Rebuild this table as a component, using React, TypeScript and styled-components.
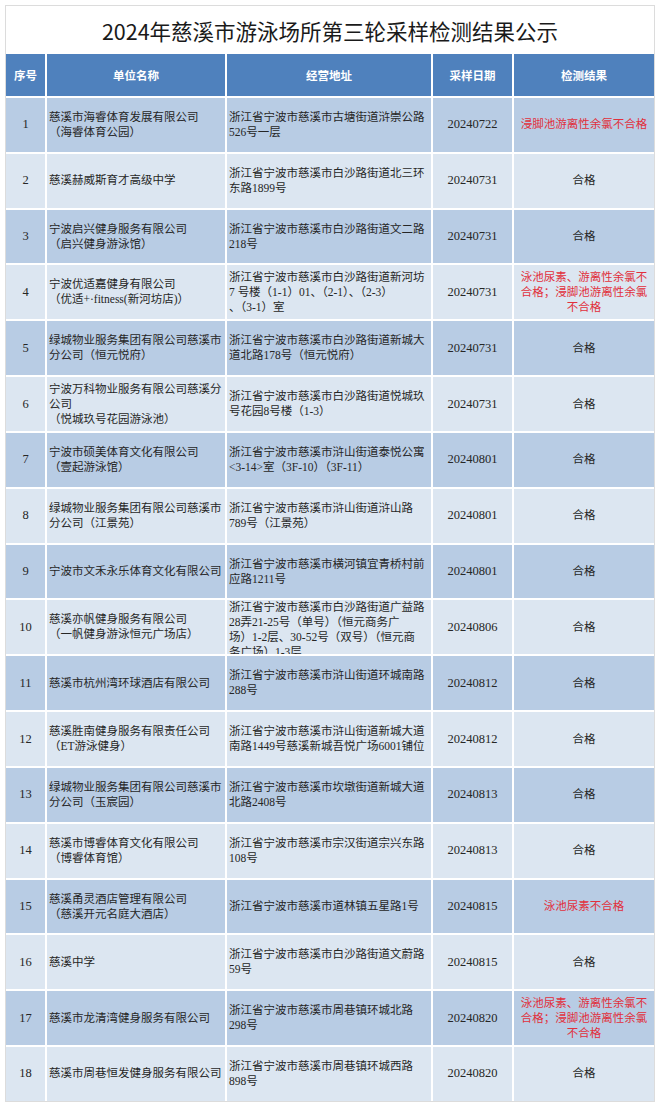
import React from 'react';
import styled, { createGlobalStyle } from 'styled-components';

type Record = {
  no: number;
  name: string[];
  address: string[];
  date: string;
  result: string[];
  failed?: boolean;
};

const records: Record[] = [
  { no: 1, name: ['慈溪市海睿体育发展有限公司', '（海睿体育公园）'], address: ['浙江省宁波市慈溪市古塘街道浒崇公路', '526号一层'], date: '20240722', result: ['浸脚池游离性余氯不合格'], failed: true },
  { no: 2, name: ['慈溪赫威斯育才高级中学'], address: ['浙江省宁波市慈溪市白沙路街道北三环', '东路1899号'], date: '20240731', result: ['合格'] },
  { no: 3, name: ['宁波启兴健身服务有限公司', '（启兴健身游泳馆）'], address: ['浙江省宁波市慈溪市白沙路街道文二路', '218号'], date: '20240731', result: ['合格'] },
  { no: 4, name: ['宁波优适嘉健身有限公司', '（优适+·fitness(新河坊店)）'], address: ['浙江省宁波市慈溪市白沙路街道新河坊', '7 号楼（1-1）01、（2-1）、（2-3）', '、（3-1）室'], date: '20240731', result: ['泳池尿素、游离性余氯不', '合格；浸脚池游离性余氯', '不合格'], failed: true },
  { no: 5, name: ['绿城物业服务集团有限公司慈溪市', '分公司（恒元悦府）'], address: ['浙江省宁波市慈溪市白沙路街道新城大', '道北路178号（恒元悦府）'], date: '20240731', result: ['合格'] },
  { no: 6, name: ['宁波万科物业服务有限公司慈溪分', '公司', '（悦城玖号花园游泳池）'], address: ['浙江省宁波市慈溪市白沙路街道悦城玖', '号花园8号楼（1-3）'], date: '20240731', result: ['合格'] },
  { no: 7, name: ['宁波市硕美体育文化有限公司', '（壹起游泳馆）'], address: ['浙江省宁波市慈溪市浒山街道泰悦公寓', '<3-14>室（3F-10）（3F-11）'], date: '20240801', result: ['合格'] },
  { no: 8, name: ['绿城物业服务集团有限公司慈溪市', '分公司（江景苑）'], address: ['浙江省宁波市慈溪市浒山街道浒山路', '789号（江景苑）'], date: '20240801', result: ['合格'] },
  { no: 9, name: ['宁波市文禾永乐体育文化有限公司'], address: ['浙江省宁波市慈溪市横河镇宜青桥村前', '应路1211号'], date: '20240801', result: ['合格'] },
  { no: 10, name: ['慈溪亦帆健身服务有限公司', '（一帆健身游泳恒元广场店）'], address: ['浙江省宁波市慈溪市白沙路街道广益路', '28弄21-25号（单号）（恒元商务广', '场）1-2层、30-52号（双号）（恒元商', '务广场）1-3层'], date: '20240806', result: ['合格'] },
  { no: 11, name: ['慈溪市杭州湾环球酒店有限公司'], address: ['浙江省宁波市慈溪市浒山街道环城南路', '288号'], date: '20240812', result: ['合格'] },
  { no: 12, name: ['慈溪胜南健身服务有限责任公司', '（ET游泳健身）'], address: ['浙江省宁波市慈溪市浒山街道新城大道', '南路1449号慈溪新城吾悦广场6001铺位'], date: '20240812', result: ['合格'] },
  { no: 13, name: ['绿城物业服务集团有限公司慈溪市', '分公司（玉宸园）'], address: ['浙江省宁波市慈溪市坎墩街道新城大道', '北路2408号'], date: '20240813', result: ['合格'] },
  { no: 14, name: ['慈溪市博睿体育文化有限公司', '（博睿体育馆）'], address: ['浙江省宁波市慈溪市宗汉街道宗兴东路', '108号'], date: '20240813', result: ['合格'] },
  { no: 15, name: ['慈溪甬灵酒店管理有限公司', '（慈溪开元名庭大酒店）'], address: ['浙江省宁波市慈溪市道林镇五星路1号'], date: '20240815', result: ['泳池尿素不合格'], failed: true },
  { no: 16, name: ['慈溪中学'], address: ['浙江省宁波市慈溪市白沙路街道文蔚路', '59号'], date: '20240815', result: ['合格'] },
  { no: 17, name: ['慈溪市龙清湾健身服务有限公司'], address: ['浙江省宁波市慈溪市周巷镇环城北路', '298号'], date: '20240820', result: ['泳池尿素、游离性余氯不', '合格；浸脚池游离性余氯', '不合格'], failed: true },
  { no: 18, name: ['慈溪市周巷恒发健身服务有限公司'], address: ['浙江省宁波市慈溪市周巷镇环城西路', '898号'], date: '20240820', result: ['合格'] },
];

const GlobalStyle = createGlobalStyle`
  html, body {
    margin: 0;
    padding: 0;
    background: #ffffff;
  }
  body {
    font-family: "Liberation Serif", "Noto Sans CJK SC", serif;
  }
`;

const columns = '39px 178px 204px 79px 140px';

const Page = styled.div`
  padding: 5px 5px 0 5px;
  width: 650px;
`;

const Sheet = styled.div`
  border: 1px solid #dcdcdc;
  background: #ffffff;
`;

const Title = styled.h1`
  margin: 0;
  height: 48px;
  display: flex;
  align-items: center;
  justify-content: center;
  font-family: "Noto Sans CJK SC", sans-serif;
  font-weight: 400;
  font-size: 21.5px;
  color: #1a1a1a;
`;

const Table = styled.div`
  display: flex;
  flex-direction: column;
  gap: 2px;
  background: #ffffff;
`;

const HeaderRow = styled.div`
  display: grid;
  grid-template-columns: ${columns};
  column-gap: 2px;
  height: 42px;
`;

const HeaderCell = styled.div`
  background: #4f81bd;
  color: #ffffff;
  display: flex;
  align-items: center;
  justify-content: center;
  font-family: "Noto Sans CJK SC", sans-serif;
  font-size: 11.5px;
  font-weight: 700;
`;

const Row = styled.div<{ $band: boolean }>`
  display: grid;
  grid-template-columns: ${columns};
  column-gap: 2px;
  height: 53.83px;

  & > div {
    background: ${(p) => (p.$band ? '#b8cce4' : '#dce6f1')};
  }
`;

const Cell = styled.div<{ $center?: boolean; $red?: boolean; $size?: number }>`
  display: flex;
  align-items: safe center;
  justify-content: ${(p) => (p.$center ? 'center' : 'flex-start')};
  text-align: ${(p) => (p.$center ? 'center' : 'left')};
  padding: 0 ${(p) => (p.$center ? 0 : 2)}px;
  overflow: hidden;
  color: ${(p) => (p.$red ? '#e1303c' : '#262626')};
  font-size: ${(p) => p.$size ?? 11.5}px;
  line-height: 15px;
`;

const Lines = styled.div`
  & > span {
    display: block;
    white-space: nowrap;
  }
`;

function Text({ lines }: { lines: string[] }) {
  return (
    <Lines>
      {lines.map((l, i) => (
        <span key={i}>{l}</span>
      ))}
    </Lines>
  );
}

export default function App() {
  return (
    <>
      <GlobalStyle />
      <Page>
        <Sheet>
          <Title>2024年慈溪市游泳场所第三轮采样检测结果公示</Title>
          <Table>
            <HeaderRow>
              <HeaderCell>序号</HeaderCell>
              <HeaderCell>单位名称</HeaderCell>
              <HeaderCell>经营地址</HeaderCell>
              <HeaderCell>采样日期</HeaderCell>
              <HeaderCell>检测结果</HeaderCell>
            </HeaderRow>
            {records.map((r) => (
              <Row key={r.no} $band={r.no % 2 === 1}>
                <Cell $center $size={12.5}>{r.no}</Cell>
                <Cell>
                  <Text lines={r.name} />
                </Cell>
                <Cell>
                  <Text lines={r.address} />
                </Cell>
                <Cell $center $size={12.5}>{r.date}</Cell>
                <Cell $center $red={r.failed}>
                  <Text lines={r.result} />
                </Cell>
              </Row>
            ))}
          </Table>
        </Sheet>
      </Page>
    </>
  );
}
